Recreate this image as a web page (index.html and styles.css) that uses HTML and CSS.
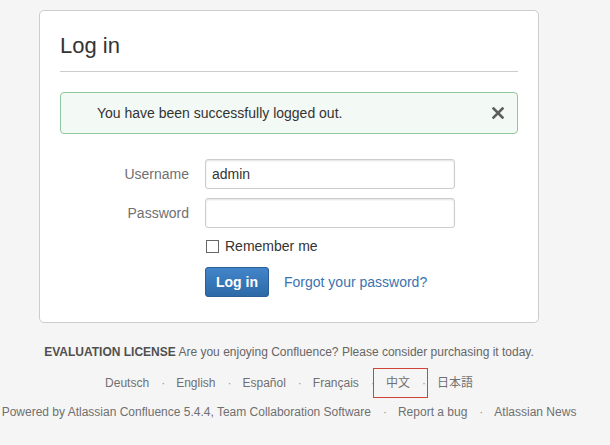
FILE: index.html
```html
<html lang="en">

<head>
  <meta charset="UTF-8">
  <meta name="viewport" content="width=device-width, initial-scale=1.0">
  <title>Log in - Confluence</title>
  <link rel="stylesheet" href="styles.css">
</head>

<body>
  <div class="page">
    <div class="card">
      <div class="card-header">
        <h1>Log in</h1>
      </div>
      <div class="message success">
        <span class="message-text">You have been successfully logged out.</span>
        <button type="button" class="close" title="Close">
          <svg width="12" height="12" viewBox="0 0 12 12">
            <path d="M1.5 1.5 L10.5 10.5 M10.5 1.5 L1.5 10.5" stroke="#5e5e5e" stroke-width="2.6" stroke-linecap="square" fill="none" />
          </svg>
        </button>
      </div>
      <form class="login-form" action="/dologin.action" method="post">
        <label for="os_username" class="field-label">Username</label>
        <input type="text" id="os_username" name="os_username" class="text" value="admin">
        <label for="os_password" class="field-label">Password</label>
        <input type="password" id="os_password" name="os_password" class="text">
        <label class="remember">
          <input type="checkbox" name="os_cookie" class="checkbox">
          Remember me
        </label>
        <div class="actions">
          <button type="submit" class="button primary">Log in</button>
          <a href="#" class="forgot">Forgot your password?</a>
        </div>
      </form>
    </div>

    <div class="footer">
      <p class="license"><strong>EVALUATION LICENSE</strong> Are you enjoying Confluence? Please consider purchasing it today.</p>
      <ul class="links languages">
        <li>Deutsch</li>
        <li>English</li>
        <li>Español</li>
        <li>Français</li>
        <li><span class="cjk current">中文</span></li>
        <li><span class="cjk jp" lang="ja">日本語</span></li>
      </ul>
      <ul class="links powered">
        <li>Powered by Atlassian Confluence 5.4.4, Team Collaboration Software</li>
        <li>Report a bug</li>
        <li>Atlassian News</li>
      </ul>
      <div class="footer-logo">
        <svg width="60" height="10" viewBox="0 0 60 10">
          <path d="M4 10 L8 6 L12 10 Z" fill="#e4e4e4" />
          <path d="M46 10 L50 5 L54 10 Z" fill="#e4e4e4" />
        </svg>
      </div>
    </div>
  </div>
</body>

</html>
```

FILE: styles.css
```css
body {
  background-color: #f5f5f5;
  font-family: "Liberation Sans", Arial, sans-serif;
  color: #333;
  margin: 0;
  overflow: hidden;
}

.page {
  width: 578px;
}

.card {
  width: 500px;
  box-sizing: border-box;
  margin: 10px 0 0 39px;
  padding: 22px 20px 25px;
  background-color: #fff;
  border: 1px solid #ccc;
  border-radius: 5px;
}

.card-header {
  padding-bottom: 12px;
  border-bottom: 1px solid #ccc;
}

.card-header h1 {
  margin: 0;
  font-size: 22px;
  line-height: 26px;
  font-weight: normal;
  color: #333;
}

/* green "logged out" notice */
.message {
  display: flex;
  align-items: center;
  margin-top: 20px;
  padding: 10px 13px 10px 36px;
  font-size: 14px;
  line-height: 20px;
  border: 1px solid #91c89c;
  border-radius: 4px;
}

.message.success {
  background-color: #f3f9f4;
}

.message-text {
  flex: 1;
}

.close {
  display: flex;
  padding: 0;
  border: none;
  background: none;
  cursor: pointer;
}

.login-form {
  display: grid;
  grid-template-columns: 129px 250px;
  column-gap: 16px;
  row-gap: 9px;
  margin: 25px 0 0;
  font-size: 14px;
}

.field-label {
  text-align: right;
  line-height: 30px;
  color: #707070;
}

input.text {
  height: 30px;
  box-sizing: border-box;
  padding: 0 6px;
  font-family: inherit;
  font-size: 14px;
  color: #333;
  border: 1px solid #ccc;
  border-radius: 3px;
  box-shadow: inset 0 1px 2px rgba(0, 0, 0, 0.12);
}

input.text:focus {
  outline: none;
}

.remember {
  grid-column: 2;
  display: flex;
  align-items: center;
  line-height: 18px;
  color: #333;
}

.checkbox {
  appearance: none;
  -webkit-appearance: none;
  width: 13px;
  height: 13px;
  margin: 0 6px 0 1px;
  border: 1px solid #666;
  background-color: #fff;
}

.actions {
  grid-column: 2;
  display: flex;
  align-items: center;
  margin-top: 3px;
}

.button.primary {
  height: 30px;
  padding: 0 10px;
  font-family: inherit;
  font-size: 14px;
  font-weight: bold;
  color: #fff;
  background-color: #3572b0;
  background-image: linear-gradient(#4285c9, #2d69a7);
  border: 1px solid #2b5f97;
  border-radius: 3px;
  cursor: pointer;
}

.forgot {
  margin-left: 15px;
  color: #3b73af;
  text-decoration: none;
}

/* page footer */
.footer {
  margin-top: 20px;
  text-align: center;
  font-size: 12px;
  line-height: 18px;
  color: #707070;
}

.license {
  margin: 0;
  color: #666;
}

.license strong {
  color: #505050;
}

.links {
  display: flex;
  justify-content: center;
  margin: 13px 0 0;
  padding: 0;
  list-style: none;
  white-space: nowrap;
}

.links.powered {
  margin-top: 11px;
}

.links li + li::before {
  content: "·";
  padding: 0 11px 0 12px;
  color: #999;
}

.cjk {
  font-family: "Liberation Sans", "Noto Sans CJK SC", sans-serif;
}

.cjk.jp {
  font-family: "Liberation Sans", "Noto Sans CJK JP", sans-serif;
}

.current {
  padding: 7px 17px 7px 12px;
  margin: 0 -18px 0 -13px;
  border: 1px solid #d04437;
}

.footer-logo {
  display: flex;
  justify-content: center;
  margin-top: 19px;
}
```
